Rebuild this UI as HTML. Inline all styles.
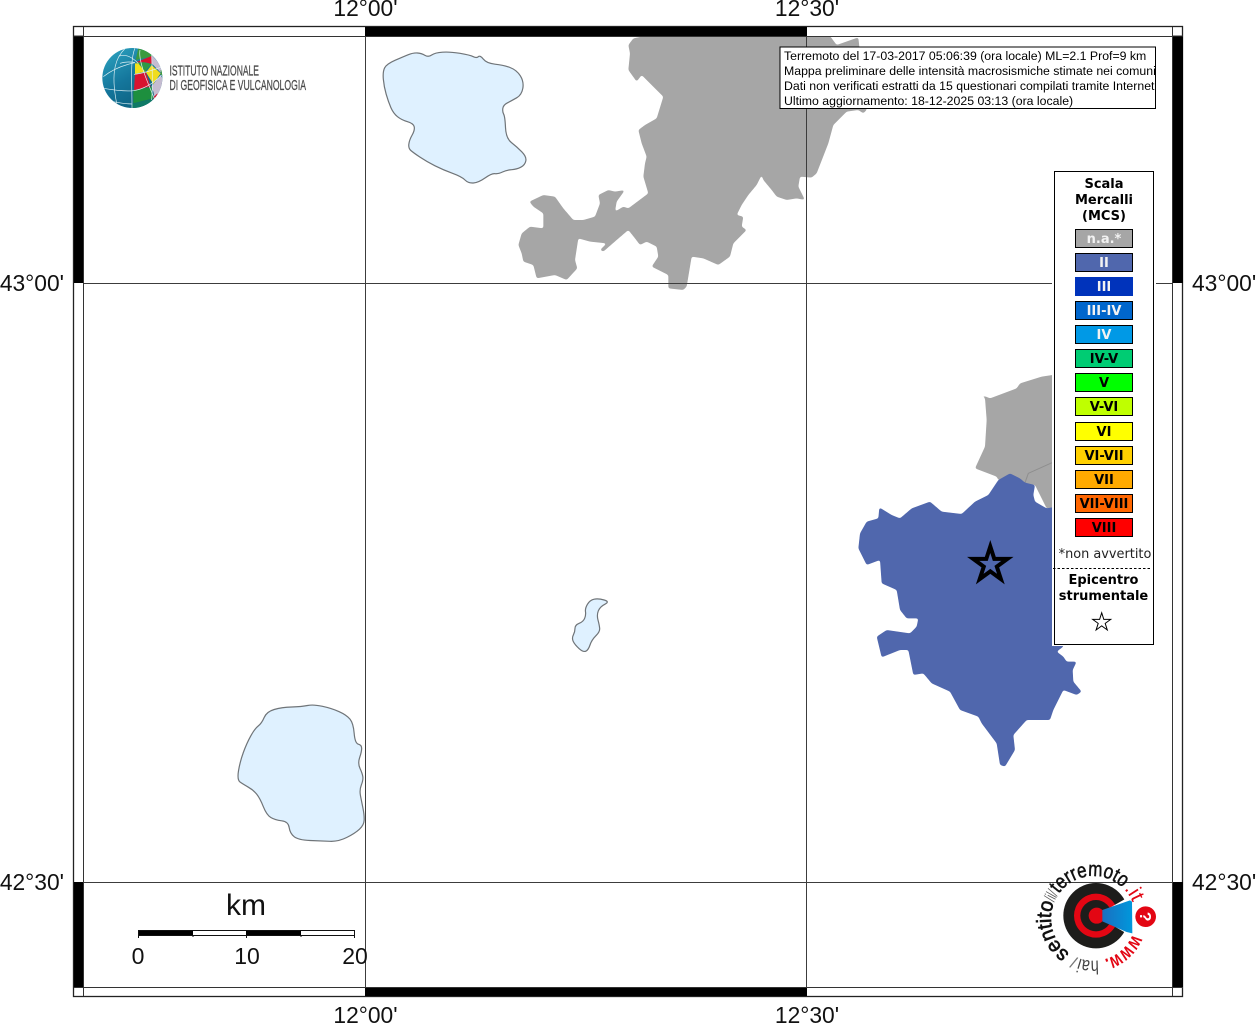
<!DOCTYPE html>
<html><head><meta charset="utf-8"><style>
html,body{margin:0;padding:0;background:#fff;width:1256px;height:1024px;overflow:hidden}
svg{display:block;position:absolute;left:0;top:0}
.ax{font:22.8px "Liberation Sans",sans-serif;fill:#111}
.lg{font:bold 13px "DejaVu Sans",sans-serif;text-anchor:middle;fill:#000}
.sw{font:bold 13px "DejaVu Sans",sans-serif;text-anchor:middle}
.bx{font:12.3px "Liberation Sans",sans-serif;fill:#000}
.ns{vector-effect:non-scaling-stroke}
</style></head><body>
<svg width="1256" height="1024" viewBox="0 0 1256 1024" xmlns="http://www.w3.org/2000/svg">
<defs>
<clipPath id="map"><rect x="83" y="36" width="1090" height="952"/></clipPath>
<clipPath id="bxc"><rect x="780" y="47" width="375.5" height="61"/></clipPath>
<clipPath id="gl"><circle cx="187" cy="174" r="90"/></clipPath>
<linearGradient id="gb" x1="0" y1="0" x2="0.6" y2="1"><stop offset="0" stop-color="#2fa8c4"/><stop offset=".55" stop-color="#14769c"/><stop offset="1" stop-color="#0d5f7c"/></linearGradient>
<linearGradient id="cone" x1="0" y1="0" x2="1" y2="0"><stop offset="0" stop-color="#1a6fc0"/><stop offset="1" stop-color="#0098dc"/></linearGradient>
<path id="arc" d="M337.8 252.6A127 127 0 1 1 345.1 182.95"/>
<filter id="sm" filterUnits="userSpaceOnUse" x="0" y="0" width="1256" height="1024" color-interpolation-filters="sRGB"><feGaussianBlur stdDeviation="1"/><feComponentTransfer><feFuncA type="linear" slope="6" intercept="-2.5"/></feComponentTransfer></filter>
</defs>

<g clip-path="url(#map)">
<!-- grey north -->
<g filter="url(#sm)"><g transform="translate(500 30) scale(.33333)">
<polygon fill="#a6a6a6" points="385,45 400,25 435,18 990,18 1010,45 1075,22 1078,50 1100,240 1090,250 1075,240 1040,245 1000,285 985,340 950,430 935,443 900,440 895,470 915,510 890,505 860,510 830,500 815,480 790,450 785,435 770,465 745,495 725,525 710,555 730,560 725,590 740,600 715,625 700,640 690,680 655,705 610,685 575,680 560,770 550,780 505,775 505,735 455,710 475,680 470,650 440,635 420,645 405,625 385,600 350,630 310,665 300,660 320,640 270,635 235,625 225,690 232,715 200,750 165,735 110,745 100,705 70,695 65,670 55,645 65,610 90,590 130,595 130,550 100,530 88,515 130,495 165,500 190,535 220,570 250,570 285,560 300,520 295,495 325,480 345,485 375,480 350,515 345,545 370,530 385,535 445,490 430,440 435,400 440,380 425,340 415,300 435,285 470,265 490,200 465,175 425,135 410,155 385,120 390,70"/>
</g></g>
<!-- grey east + blue -->
<g filter="url(#sm)"><g transform="translate(850 370) scale(.33333)">
<polygon fill="#a6a6a6" points="390,72 405,85 410,150 405,230 375,295 440,320 445,330 520,340 555,345 590,415 640,420 640,10 575,20 510,40 500,55 420,85"/>
</g></g>
<g transform="translate(850 370) scale(.33333)">
<path class="ns" d="M525 338L535 310L606 278" fill="none" stroke="#8e8e8e" stroke-width="1"/>
</g>
<g filter="url(#sm)"><g transform="translate(850 370) scale(.33333)">
<polygon fill="#5067ad" points="445,330 480,310 510,325 525,338 555,345 550,375 555,395 590,415 606,412 640,412 640,830 620,845 640,860 650,875 680,875 668,900 670,935 695,965 680,975 640,960 610,1020 600,1050 530,1050 490,1095 495,1140 465,1190 450,1185 440,1120 395,1060 385,1040 330,1020 300,965 245,940 220,910 190,915 175,840 150,840 95,862 80,800 110,780 180,790 200,770 205,745 170,745 150,720 140,660 95,640 90,570 50,585 25,535 30,490 50,455 85,445 88,412 125,435 150,445 185,415 240,395 275,425 335,432 375,395 415,375"/>
</g></g>
<!-- lakes -->
<g transform="translate(370 40) scale(.33333)">
<path class="ns" fill="#dff1ff" stroke="#6f7478" stroke-width="1.2" d="M44 83.5Q50 72 75 61T115 44T142.5 39T165 46T185 45T217.5 36.5T270 40T310 50T325 50T340 57.5T375 72.5T420 82.5T451 107.5T458.5 145T440 173.5T412.5 188.5T398.5 205T401 222.5T406.5 262.5T424 307.5T455 335T467.5 362.5T452.5 381.5T425 389T397.5 396T375 401T345 414T310 429T285 420T247.5 400T195 377.5T150 351.5T122.5 331.5T116.5 312.5T126.5 285T132.5 260T112.5 245T82.5 230T62.5 202.5T48.5 162.5T40 117.5T44 83.5Z"/>
</g>
<g transform="translate(225 695) scale(.33333)">
<path class="ns" fill="#dff1ff" stroke="#6f7478" stroke-width="1.2" d="M40.5 227.5Q45 200 55 172.5T77.5 122.5T100 92.5T117.5 67.5T147.5 43.5T200 36T247.5 31.5T292.5 34T342.5 50T375 72.5T387.5 115T400 147.5T410 160T404 187.5T405 220T413.5 245T409 270T406.5 302.5T414 340T417.5 375T403.5 402.5T365 427.5T315 439T255 436.5T207.5 425T192.5 397.5T170 377.5T137.5 367.5T115 335T95 297.5T70 276.5T45.5 261.5T40.5 227.5Z"/>
</g>
<g transform="translate(560 590) scale(.33333)">
<path class="ns" fill="#dff1ff" stroke="#6f7478" stroke-width="1.2" d="M82.5 42.5Q90 30 102.5 27.5T132.5 30T135 42.5T115 62.5T114 90T119 115T107.5 137.5T90 165T77.5 183.5T57.5 176T40 155T40 135T45 115T57.5 100T74 85T76.5 65T82.5 42.5Z"/>
</g>
<!-- grid -->
<path d="M365.5 36V988M806.5 36V988M83 283.5H1173M83 882.5H1173" stroke="#3c3c3c" stroke-width="1" fill="none"/>
<!-- epicentre -->
<polygon points="990.3,546.5 994.3,558.9 1007.4,558.9 996.8,566.6 1000.9,579.1 990.3,571.4 979.7,579.1 983.8,566.6 973.2,558.9 986.3,558.9" fill="none" stroke="#000" stroke-width="4"/>
</g>

<!-- frame -->
<rect x="73.5" y="26.5" width="1109" height="970" fill="none" stroke="#222" stroke-width="1.3"/>
<rect x="74" y="36" width="9" height="247" fill="#000"/>
<rect x="74" y="882" width="9" height="105" fill="#000"/>
<rect x="1173" y="36" width="10" height="247" fill="#000"/>
<rect x="1173" y="882" width="10" height="105" fill="#000"/>
<rect x="365" y="27" width="442" height="9" fill="#000"/>
<rect x="365" y="988" width="442" height="8" fill="#000"/>
<rect x="83.5" y="36.5" width="1089" height="951" fill="none" stroke="#333"/>
<path d="M83.5 27V36M1172.5 27V36M83.5 988V996M1172.5 988V996M74 36H83M74 987.5H83M1173 36H1183M1173 987.5H1183" stroke="#333" fill="none"/>

<!-- axis labels -->
<g class="ax">
<text x="365.5" y="16" text-anchor="middle">12°00'</text>
<text x="807" y="16" text-anchor="middle">12°30'</text>
<text x="365.5" y="1023" text-anchor="middle">12°00'</text>
<text x="807" y="1023" text-anchor="middle">12°30'</text>
<text x="64" y="291" text-anchor="end">43°00'</text>
<text x="64" y="890" text-anchor="end">42°30'</text>
<text x="1192" y="291">43°00'</text>
<text x="1192" y="890">42°30'</text>
</g>

<!-- INGV logo -->
<g transform="translate(70 20) scale(.33333)">
<g clip-path="url(#gl)">
<rect x="95" y="80" width="190" height="190" fill="url(#gb)"/>
<polygon points="197,120 205,85 245,95 245,110" fill="#3a9a3f"/>
<polygon points="197,127 245,108 245,132 225,127" fill="#d8132f"/>
<polygon points="245,105 285,150 272,158 245,130" fill="#c5bcd0"/>
<polygon points="197,127 225,127 245,132 225,155 205,130" fill="#2f9a45"/>
<polygon points="195,130 205,130 225,155 195,162" fill="#f2e21a"/>
<polygon points="228,157 245,135 272,160 250,192" fill="#f0dc1e"/>
<polygon points="195,163 228,158 242,200 192,210" fill="#d8132f"/>
<polygon points="244,200 272,165 285,190 255,240 250,215" fill="#c5bcd0"/>
<polygon points="190,212 245,200 250,235 190,250" fill="#1d8f3e"/>
<polygon points="186,252 250,236 230,270 186,270" fill="#0f7a66"/>
<polygon points="272,150 285,150 285,172 272,165" fill="#3a9a3f"/>
<polygon points="250,232 262,220 262,235 252,240" fill="#d8132f"/>
</g>
<g fill="none" stroke="#dff0f4" stroke-width="2" clip-path="url(#gl)">
<path d="M165 86C140 110 120 150 140 250"/>
<path d="M195 84C180 120 186 180 186 265"/>
<path d="M148 108C170 100 190 115 205 130"/>
<path d="M150 130C165 125 185 125 195 128"/>
<path d="M100 170C125 150 160 135 195 128"/>
<path d="M100 205C130 210 165 215 190 212"/>
<path d="M130 245C155 250 170 252 186 252"/>
<path d="M210 90C205 120 225 170 255 240"/>
<path d="M245 100C245 130 250 180 245 240"/>
<path d="M192 163C220 160 250 150 278 140"/>
<path d="M190 212C220 208 250 190 275 165"/>
</g>
</g>
<g font-family="'Liberation Sans',sans-serif" font-size="14.5" fill="#4b4b4b" stroke="#4b4b4b" stroke-width=".25">
<text x="169.5" y="75.5" textLength="89.5" lengthAdjust="spacingAndGlyphs">ISTITUTO NAZIONALE</text>
<text x="169.5" y="90" textLength="136.5" lengthAdjust="spacingAndGlyphs">DI GEOFISICA E VULCANOLOGIA</text>
</g>

<!-- Text box -->
<rect x="780" y="47" width="375.5" height="61.5" fill="#fff" stroke="#000"/>
<g class="bx" clip-path="url(#bxc)">
<text x="784" y="60">Terremoto del 17-03-2017 05:06:39 (ora locale) ML=2.1 Prof=9 km</text>
<text x="784" y="75">Mappa preliminare delle intensità macrosismiche stimate nei comuni</text>
<text x="784" y="90">Dati non verificati estratti da 15 questionari compilati tramite Internet.</text>
<text x="784" y="105">Ultimo aggiornamento: 18-12-2025 03:13 (ora locale)</text>
</g>

<!-- Legend -->
<rect x="1052" y="169" width="104" height="477" fill="#fff"/>
<rect x="1054.5" y="171.5" width="99" height="473" fill="#fff" stroke="#000"/>
<text class="lg" x="1104" y="188">Scala</text>
<text class="lg" x="1104" y="204">Mercalli</text>
<text class="lg" x="1104" y="220">(MCS)</text>
<g stroke="#000" stroke-width="1">
<rect x="1075.5" y="229.5" width="57" height="18" fill="#a6a6a6"/>
<rect x="1075.5" y="253.5" width="57" height="18" fill="#5067ad"/>
<rect x="1075.5" y="277.5" width="57" height="18" fill="#0033bb" stroke="#0033bb"/>
<rect x="1075.5" y="301.5" width="57" height="18" fill="#0066cc"/>
<rect x="1075.5" y="325.5" width="57" height="18" fill="#0099e6"/>
<rect x="1075.5" y="349.5" width="57" height="18" fill="#00cc73"/>
<rect x="1075.5" y="373.5" width="57" height="18" fill="#00ff00"/>
<rect x="1075.5" y="397.5" width="57" height="18" fill="#bfff00"/>
<rect x="1075.5" y="422.5" width="57" height="18" fill="#ffff00"/>
<rect x="1075.5" y="446.5" width="57" height="18" fill="#ffd000"/>
<rect x="1075.5" y="470.5" width="57" height="18" fill="#ffaa00"/>
<rect x="1075.5" y="494.5" width="57" height="18" fill="#ff6600"/>
<rect x="1075.5" y="518.5" width="57" height="18" fill="#ff0000"/>
</g>
<g class="sw" fill="#eee">
<text x="1104" y="243" fill="#f2f2f2">n.a.*</text>
<text x="1104" y="267" fill="#f2f2f2">II</text>
<text x="1104" y="291" fill="#f2f2f2">III</text>
<text x="1104" y="315" fill="#f2f2f2">III-IV</text>
<text x="1104" y="339" fill="#f2f2f2">IV</text>
<text x="1104" y="363" fill="#000">IV-V</text>
<text x="1104" y="387" fill="#000">V</text>
<text x="1104" y="411" fill="#000">V-VI</text>
<text x="1104" y="436" fill="#000">VI</text>
<text x="1104" y="460" fill="#000">VI-VII</text>
<text x="1104" y="484" fill="#000">VII</text>
<text x="1104" y="508" fill="#000">VII-VIII</text>
<text x="1104" y="532" fill="#000">VIII</text>
</g>
<text x="1105" y="558" text-anchor="middle" font-family="'DejaVu Sans',sans-serif" font-size="12.9" fill="#222">*non avvertito</text>
<path d="M1053 568.5H1152" stroke="#000" stroke-dasharray="2.5 2" fill="none"/>
<text class="lg" x="1103.5" y="584">Epicentro</text>
<text class="lg" x="1103.5" y="600">strumentale</text>
<polygon points="1101.7,612.8 1103.8,619.4 1110.7,619.4 1105.2,623.4 1107.3,630 1101.7,625.9 1096.1,630 1098.2,623.4 1092.7,619.4 1099.6,619.4" fill="#fff" stroke="#000" stroke-width="1"/>

<!-- Scale bar -->
<rect x="138" y="930" width="55" height="6" fill="#000"/>
<rect x="246" y="930" width="55" height="6" fill="#000"/>
<path d="M138.5 930.5H354.5M138 935.5H355M138.5 930V938M193 935V937M246.5 935V938M301 935V937M354.5 930V938" stroke="#111" fill="none"/>
<g font-family="'Liberation Sans',sans-serif" fill="#111" text-anchor="middle">
<text x="246" y="915" font-size="30">km</text>
<text x="138" y="964" font-size="23">0</text>
<text x="247" y="964" font-size="23">10</text>
<text x="355" y="964" font-size="23">20</text>
</g>

<!-- hai sentito logo -->
<g transform="translate(1020 850) scale(.33333)">
<circle cx="228" cy="197" r="98" fill="#1d1d1b"/>
<circle cx="228" cy="197" r="66" fill="#e30613"/>
<circle cx="228" cy="197" r="47" fill="#1d1d1b"/>
<polygon points="228,197 345,130 345,265" fill="#fff"/>
<circle cx="230" cy="197" r="24" fill="#e30613"/>
<polygon points="247,180 330,151 336,155 337,250 320,246 247,214" fill="url(#cone)"/>
<circle cx="377" cy="200" r="31" fill="#e30613"/>
<text transform="translate(377 200) rotate(90)" y="17" font-family="'Liberation Sans',sans-serif" font-weight="bold" font-size="48" fill="#fff" text-anchor="middle">?</text>
<g font-family="'Liberation Sans',sans-serif" fill="#111">
<text font-size="62" font-weight="bold" fill="#e30613"><textPath href="#arc" startOffset="0" textLength="118" lengthAdjust="spacingAndGlyphs">www.</textPath></text>
<text font-size="58" fill="#444"><textPath href="#arc" startOffset="135" textLength="58" lengthAdjust="spacingAndGlyphs">hai</textPath></text>
<text font-size="50" fill="#777"><textPath href="#arc" startOffset="197">/</textPath></text>
<text font-size="62" stroke="#111" stroke-width="2"><textPath href="#arc" startOffset="226" textLength="173" lengthAdjust="spacingAndGlyphs">sentito</textPath></text>
<text font-size="50" fill="#555"><textPath href="#arc" startOffset="399" textLength="27" lengthAdjust="spacingAndGlyphs">/il/</textPath></text>
<text font-size="62" stroke="#111" stroke-width="1.5"><textPath href="#arc" startOffset="428" textLength="219" lengthAdjust="spacingAndGlyphs">terremoto</textPath></text>
<text font-size="62" fill="#e30613"><textPath href="#arc" startOffset="652" textLength="48" lengthAdjust="spacingAndGlyphs">.it</textPath></text>
</g>
</g>
</svg>
</body></html>
